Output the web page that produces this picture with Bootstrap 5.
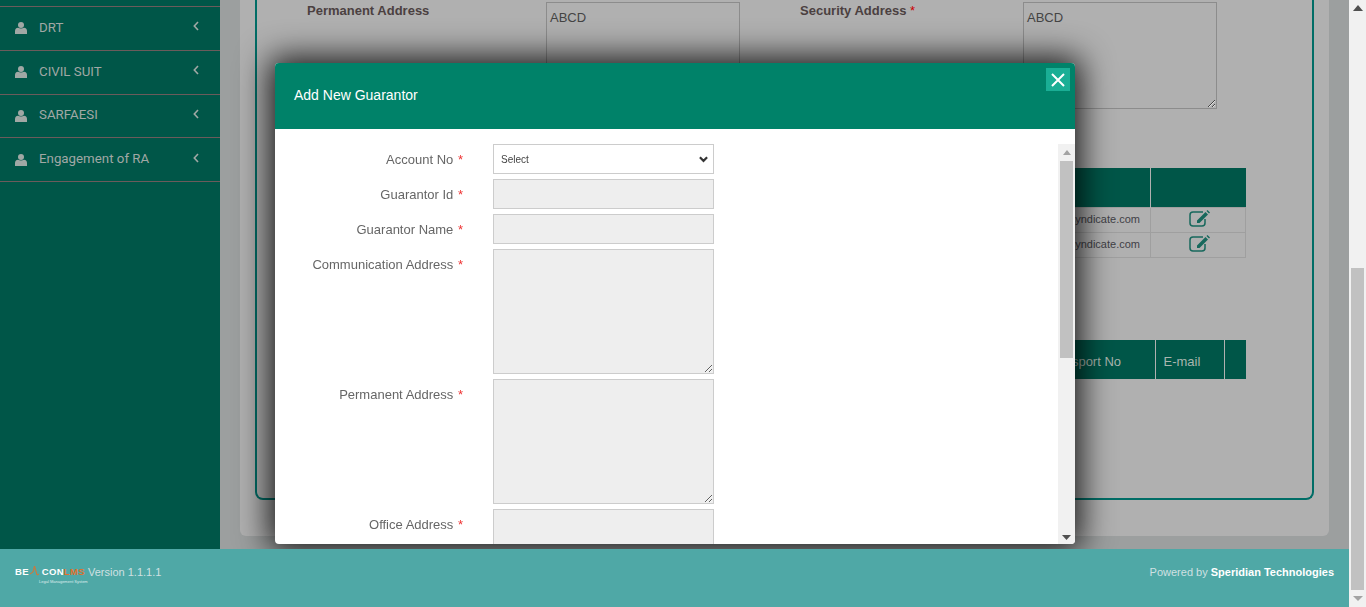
<!DOCTYPE html>
<html lang="en">
<head>
<meta charset="utf-8">
<title>Add New Guarantor</title>
<link href="https://cdn.jsdelivr.net/npm/bootstrap@5.3.0/dist/css/bootstrap.min.css" rel="stylesheet">
<style>
html,body{height:607px;overflow:hidden}
body{font-family:"Liberation Sans",Arial,sans-serif;font-size:14px;background:#9c9f9f;color:#333}
.shell{height:607px}
.work{width:1349px}
.upper{height:549px}
.side-pane{width:220px;background:#005648;padding-top:6px;font-family:Roboto,sans-serif;color:#a0a8a5}
.side-link{height:43.75px;border-top:1px solid #6b5b5b;padding-left:15px;padding-right:21px;color:#a0a8a5;font-size:13.3px;text-decoration:none}
.side-end{border-top:1px solid #6b5b5b}
.side-link span{margin-left:12px;margin-top:-1px}
.page-pane{padding:0 20px 0 20px;background:#9c9f9f}
.panel-box{width:1089px;height:536px;background:#b0b0b0;border-radius:0 0 6px 6px;padding-left:15px}
.field-frame{width:1059px;height:500px;border:2px solid #006d66;border-top:0;border-radius:0 0 8px 8px;overflow:hidden}
.addr-row{height:158px;padding-top:2px}
.addr-label{font-weight:700;color:#4b4040;font-size:13px;margin-top:-1px}
.addr-label i{color:#c00;font-style:normal;font-weight:400}
.lab-a{margin-left:50px;width:239px}
.lab-b{margin-left:60px;width:223px}
textarea.addr-box{display:block;width:194px;height:107px;border:1px solid #8c8c8c;border-radius:0;background:transparent;padding:7px 3px 0;color:#444;font-size:13px;line-height:16px;font-family:inherit;outline:0}
.grid-a{margin:10px 0 0 34px;width:955px;table-layout:fixed;border-collapse:collapse}
.grid-a th{height:39px;background:#005648;border-right:1px solid #b0b0b0;padding:0}
.grid-a th:last-child{border-right:0}
.grid-a td{height:25px;border:1px solid #9f9f9f;padding:0;font-size:11px;color:#3f3f46;text-align:right}
.grid-a td.mail{padding-right:10px}
.grid-a td.act{text-align:center;line-height:0}
.grid-a td.act svg{margin:0 0 2px 2px}
.grid-b{margin:82px 0 0 34px;width:955px;table-layout:fixed;border-collapse:collapse}
.grid-b th{height:39px;background:#005648;border-right:1px solid #b0b0b0;padding:6px 0 0 8px;color:#a9b5ae;font-size:13px;font-weight:400}
.grid-b th.pass{padding-left:14px}
.grid-b th:last-child{border-right:0}
.foot-bar{height:58px;background:#4fa8a6;padding:0 15px 12px;font-size:11px;color:#cfe0e2;position:relative;z-index:1060}
.foot-bar b{color:#fff}
.brand-mark{position:relative;height:14px;width:70px;margin-right:3px;font-weight:700;font-size:9.500px;letter-spacing:.3px;color:#fff;line-height:12px;white-space:nowrap}
.brand-mark svg{margin:0 3px 0 1px;vertical-align:-1px}
.brand-mark em{font-style:normal;color:#e0712b}
.brand-mark small{position:absolute;left:24px;top:11px;font-size:4px;font-weight:400;letter-spacing:0;color:#dfecec}
.rail{width:17px;background:#f1f1f1;position:relative;z-index:1060}
.page-thumb{margin:268px 2px 0;height:322px;background:#c1c1c1}
.rail-up{position:absolute;left:4px;top:5px}
.rail-down{position:absolute;left:4px;top:596px}
.modal-dialog.guarantor-dialog{max-width:800px;width:800px;margin:63px 0 0 275px}
.guarantor-dialog .modal-content{height:481px;border:0;border-radius:4px;box-shadow:0 0 32px 6px rgba(0,0,0,.85);overflow:hidden;background:#fff}
.guarantor-head{height:66px;background:#008269;border:0;border-radius:0;padding:0 19px;position:relative}
.guarantor-head .modal-title{font-size:14px;font-weight:400;color:#fff;line-height:1;margin-top:-2px}
.close-box{position:absolute;right:5px;top:5px;width:24px;height:23px;background:#1aae95;border:0;padding:0}
.guarantor-body{height:415px;padding:0;overflow:hidden}
.form-area{padding-top:15px}
.form-line{margin-bottom:5px}
.form-line label{width:188px;height:30px;text-align:right;line-height:32px;color:#666;font-size:13px;margin:0 30px 0 0;padding:0;flex:none}
.form-line label i{color:#e33;font-style:normal;margin-left:1px}
.form-line .form-control,.form-line .form-select{width:221px;height:30px;min-height:0;border:1px solid #ccc;border-radius:0;flex:none}
.form-line .form-control:disabled{background:#eee;opacity:1}
.form-line .form-select{font-size:10px;padding:0 0 0 7px;color:#444;background-image:url("data:image/svg+xml,%3csvg xmlns='http://www.w3.org/2000/svg' viewBox='0 0 10 7'%3e%3cpath fill='none' stroke='%23333' stroke-width='2.400' d='M1 1l4 4 4-4'/%3e%3c/svg%3e");background-position:right 5px center;background-size:9px 7px;background-color:#fff}
.form-line textarea.form-control{height:125px}
.inner-rail{width:17px;background:#f1f1f1;margin-top:15px;height:400px}
.inner-up{display:block;margin:6px auto 6px}
.inner-thumb{margin:0 2px;height:197px;background:#c1c1c1}
.inner-down{display:block;position:absolute;left:4px;bottom:4px}
</style>
</head>
<body>
<div class="shell d-flex">
  <div class="work d-flex flex-column">
    <div class="upper d-flex">
      <nav class="side-pane flex-shrink-0">
        <a class="side-link d-flex align-items-center" href="#"><svg width="12" height="12" viewBox="0 0 12 12" fill="#a0a8a5"><circle cx="6" cy="3" r="3"/><path d="M0 12V9q0-3 3-3.300q3 1.500 6 0q3 .3 3 3.300v3z"/></svg><span>DRT</span><svg class="ms-auto mb-1" width="6" height="10" viewBox="0 0 6 10" fill="none" stroke="#a0a8a5" stroke-width="1.600"><path d="M5 1 1.300 5 5 9"/></svg></a>
        <a class="side-link d-flex align-items-center" href="#"><svg width="12" height="12" viewBox="0 0 12 12" fill="#a0a8a5"><circle cx="6" cy="3" r="3"/><path d="M0 12V9q0-3 3-3.300q3 1.500 6 0q3 .3 3 3.300v3z"/></svg><span>CIVIL SUIT</span><svg class="ms-auto mb-1" width="6" height="10" viewBox="0 0 6 10" fill="none" stroke="#a0a8a5" stroke-width="1.600"><path d="M5 1 1.300 5 5 9"/></svg></a>
        <a class="side-link d-flex align-items-center" href="#"><svg width="12" height="12" viewBox="0 0 12 12" fill="#a0a8a5"><circle cx="6" cy="3" r="3"/><path d="M0 12V9q0-3 3-3.300q3 1.500 6 0q3 .3 3 3.300v3z"/></svg><span>SARFAESI</span><svg class="ms-auto mb-1" width="6" height="10" viewBox="0 0 6 10" fill="none" stroke="#a0a8a5" stroke-width="1.600"><path d="M5 1 1.300 5 5 9"/></svg></a>
        <a class="side-link d-flex align-items-center" href="#"><svg width="12" height="12" viewBox="0 0 12 12" fill="#a0a8a5"><circle cx="6" cy="3" r="3"/><path d="M0 12V9q0-3 3-3.300q3 1.500 6 0q3 .3 3 3.300v3z"/></svg><span>Engagement of RA</span><svg class="ms-auto mb-1" width="6" height="10" viewBox="0 0 6 10" fill="none" stroke="#a0a8a5" stroke-width="1.600"><path d="M5 1 1.300 5 5 9"/></svg></a>
        <div class="side-end"></div>
      </nav>
      <main class="page-pane flex-grow-1">
        <div class="panel-box">
          <div class="field-frame">
            <div class="addr-row d-flex">
              <div class="addr-label lab-a">Permanent Address</div>
              <textarea class="addr-box">ABCD</textarea>
              <div class="addr-label lab-b">Security Address <i>*</i></div>
              <textarea class="addr-box">ABCD</textarea>
            </div>
            <table class="grid-a">
              <colgroup><col><col style="width:95px"></colgroup>
              <thead><tr><th></th><th></th></tr></thead>
              <tbody>
                <tr><td class="mail">legal@syndicate.com</td><td class="act"><svg width="21" height="17" viewBox="0 0 21 17" fill="none"><path d="M14 2H4Q1 2 1 5v8q0 3 3 3h9q3 0 3-3V9" stroke="#17685c" stroke-width="1.500"/><path d="M8 10.500 16.500 2 19 4.500 10.500 13H8z M17.500 1 18.500 0 21 2.500 20 3.500z" fill="#17685c"/></svg></td></tr>
                <tr><td class="mail">legal@syndicate.com</td><td class="act"><svg width="21" height="17" viewBox="0 0 21 17" fill="none"><path d="M14 2H4Q1 2 1 5v8q0 3 3 3h9q3 0 3-3V9" stroke="#17685c" stroke-width="1.500"/><path d="M8 10.500 16.500 2 19 4.500 10.500 13H8z M17.500 1 18.500 0 21 2.500 20 3.500z" fill="#17685c"/></svg></td></tr>
              </tbody>
            </table>
            <table class="grid-b">
              <colgroup><col><col style="width:120px"><col style="width:69px"><col style="width:22px"></colgroup>
              <thead><tr><th></th><th class="pass">Passport No</th><th>E-mail</th><th></th></tr></thead>
            </table>
          </div>
        </div>
      </main>
    </div>
    <footer class="foot-bar d-flex align-items-center justify-content-between">
      <div class="d-flex align-items-center">
        <div class="brand-mark">BE<svg width="9" height="11" viewBox="0 0 9 11" fill="none" stroke="#e0712b" stroke-width="1"><path d="M0 9 3 7 4.500 1 7 10l2-1"/></svg>CON<em>LMS</em><small>Legal Management System</small></div>
        <span>Version 1.1.1.1</span>
      </div>
      <div>Powered by <b>Speridian Technologies</b></div>
    </footer>
  </div>
  <div class="rail d-flex flex-column">
    <svg class="rail-up" width="10" height="6" viewBox="0 0 10 6" fill="#505050"><path d="M5 0 10 6H0z"/></svg>
    <div class="page-thumb"></div>
    <svg class="rail-down" width="10" height="5" viewBox="0 0 10 5" fill="#a3a3a3"><path d="M0 0H10L5 5z"/></svg>
  </div>
</div>

<div class="modal d-block" tabindex="-1">
  <div class="modal-dialog guarantor-dialog">
    <div class="modal-content">
      <div class="modal-header guarantor-head">
        <h5 class="modal-title">Add New Guarantor</h5>
        <button type="button" class="close-box d-flex align-items-center justify-content-center" aria-label="Close"><svg width="14" height="14" viewBox="0 0 14 14" stroke="#fff" stroke-width="2"><path d="M1 1 13 13M13 1 1 13"/></svg></button>
      </div>
      <div class="modal-body guarantor-body d-flex">
        <form class="form-area flex-grow-1 overflow-hidden">
          <div class="form-line d-flex align-items-start"><label>Account No <i>*</i></label><select class="form-select"><option>Select</option></select></div>
          <div class="form-line d-flex align-items-start"><label>Guarantor Id <i>*</i></label><input class="form-control" disabled></div>
          <div class="form-line d-flex align-items-start"><label>Guarantor Name <i>*</i></label><input class="form-control" disabled></div>
          <div class="form-line d-flex align-items-start"><label>Communication Address <i>*</i></label><textarea class="form-control" disabled></textarea></div>
          <div class="form-line d-flex align-items-start"><label>Permanent Address <i>*</i></label><textarea class="form-control" disabled></textarea></div>
          <div class="form-line d-flex align-items-start"><label>Office Address <i>*</i></label><textarea class="form-control" disabled></textarea></div>
        </form>
        <div class="inner-rail position-relative flex-shrink-0">
          <svg class="inner-up" width="8" height="5" viewBox="0 0 8 5" fill="#a3a3a3"><path d="M4 0 8 5H0z"/></svg>
          <div class="inner-thumb"></div>
          <svg class="inner-down" width="9" height="5" viewBox="0 0 9 5" fill="#505050"><path d="M0 0H9L4.500 5z"/></svg>
        </div>
      </div>
    </div>
  </div>
</div>
</body>
</html>
